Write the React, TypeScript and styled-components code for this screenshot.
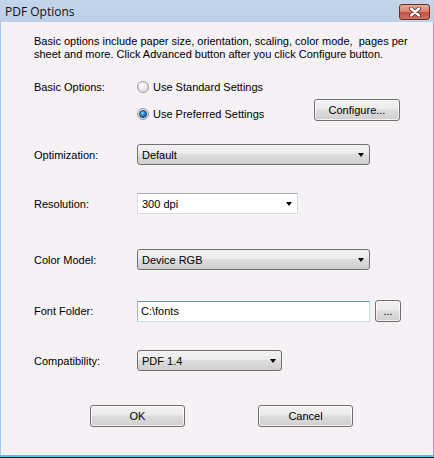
import React from "react";
import styled, { createGlobalStyle } from "styled-components";

const Global = createGlobalStyle`
  html, body { margin: 0; padding: 0; background: #f5f1f5; }
  body { font-family: "Liberation Sans", Arial, sans-serif; font-size: 11px; color: #000; }
  * { box-sizing: border-box; }
`;

const Window = styled.div`
  width: 434px;
  height: 458px;
  display: flex;
  flex-direction: column;
  background: #f5f1f5;
  box-shadow: inset 0 -1px 0 #000, inset 0 -3px 0 #46c5ee, inset 1px 0 0 #a6cbf0, inset -1px 0 0 #46c5ee;
`;

const TitleBar = styled.div`
  height: 22px;
  flex: none;
  display: flex;
  align-items: center;
  justify-content: space-between;
  padding: 0 4px 0 5px;
  background: linear-gradient(to bottom, #c3d5ea 0%, #bdd0e7 100%);
`;

const Title = styled.span`
  font-family: "Open Sans", "Liberation Sans", sans-serif;
  font-size: 12px;
  color: #111;
  margin-top: 1px;
`;

const CloseButton = styled.div`
  width: 31px;
  height: 16px;
  margin-top: 1px;
  border: 1px solid #6e2b22;
  border-radius: 3px;
  background: linear-gradient(to bottom, #e9a99b 0%, #d88676 45%, #c0503f 55%, #d27564 100%);
  display: flex;
  align-items: center;
  justify-content: center;
`;

const Body = styled.div`
  flex: 1;
  display: flex;
  flex-direction: column;
  padding: 13px 0 0 34px;
`;

const Description = styled.p`
  margin: 0;
  line-height: 13px;
  white-space: nowrap;
`;

const Row = styled.div<{ $top: number }>`
  display: grid;
  grid-template-columns: 103px auto 1fr;
  align-items: center;
  margin-top: ${(p) => p.$top}px;
`;

const Label = styled.span<{ $self?: string }>`
  align-self: ${(p) => p.$self || "center"};
  line-height: 20px;
`;

const RadioGroup = styled.div`
  width: 177px;
  display: flex;
  flex-direction: column;
  gap: 7px;
`;

const RadioLine = styled.label`
  display: flex;
  align-items: center;
  height: 20px;
  gap: 4px;
`;

const RadioCircle = styled.span<{ $checked?: boolean }>`
  width: 12px;
  height: 12px;
  border-radius: 50%;
  border: 1px solid #9a9a9a;
  background: radial-gradient(circle at 40% 35%, #ffffff 0%, #e4e4e4 55%, #cfcfcf 100%);
  display: flex;
  align-items: center;
  justify-content: center;
  &::after {
    content: "";
    display: ${(p) => (p.$checked ? "block" : "none")};
    width: 6px;
    height: 6px;
    border-radius: 50%;
    background: radial-gradient(circle at 40% 35%, #8fe0ff 0%, #1f8bd0 45%, #0b3d7c 100%);
    border: 0.5px solid #0d3a6e;
  }
`;

const Button = styled.div<{ $w: number; $h?: number }>`
  width: ${(p) => p.$w}px;
  height: ${(p) => p.$h || 22}px;
  border: 1px solid #707070;
  border-radius: 3px;
  background: linear-gradient(to bottom, #f2f2f2 0%, #ebebeb 45%, #dddddd 50%, #cfcfcf 100%);
  box-shadow: inset 0 0 0 1px rgba(255, 255, 255, 0.7);
  display: flex;
  align-items: center;
  justify-content: center;
`;

const ConfigureButton = styled(Button)`
  align-self: end;
  margin-bottom: 3px;
`;

const Select = styled.div<{ $w: number; $white?: boolean }>`
  width: ${(p) => p.$w}px;
  height: 21px;
  border: 1px solid ${(p) => (p.$white ? "#d8dde5" : "#707070")};
  border-top-color: ${(p) => (p.$white ? "#abadb3" : "#707070")};
  border-radius: ${(p) => (p.$white ? "1px" : "3px")};
  background: ${(p) =>
    p.$white
      ? "#ffffff"
      : "linear-gradient(to bottom, #f2f2f2 0%, #ebebeb 45%, #dddddd 50%, #cfcfcf 100%)"};
  display: flex;
  align-items: center;
  justify-content: space-between;
  padding: 0 5px 0 4px;
`;

const Arrow = styled.span`
  width: 0;
  height: 0;
  border-left: 3.5px solid transparent;
  border-right: 3.5px solid transparent;
  border-top: 4px solid #000;
`;

const TextInput = styled.div`
  width: 233px;
  height: 21px;
  background: #fff;
  border: 1px solid #c5dcf0;
  border-top-color: #6b8fb5;
  border-left-color: #9cbad8;
  border-radius: 1px;
  display: flex;
  align-items: center;
  padding-left: 3px;
`;

const InputGroup = styled.div`
  display: flex;
  align-items: center;
  gap: 5px;
`;

const ButtonBar = styled.div`
  display: flex;
  gap: 73px;
  margin: 34px 0 0 56px;
`;

export default function App() {
  return (
    <>
      <Global />
      <Window>
        <TitleBar>
          <Title>PDF Options</Title>
          <CloseButton>
            <svg width="14" height="10" viewBox="0 0 14 10">
              <path d="M3 1.5 L11 8.5 M11 1.5 L3 8.5" stroke="#5a1f18" strokeWidth="4" strokeLinecap="round" />
              <path d="M3 1.5 L11 8.5 M11 1.5 L3 8.5" stroke="#ffffff" strokeWidth="2.4" strokeLinecap="round" />
            </svg>
          </CloseButton>
        </TitleBar>
        <Body>
          <Description>
            Basic options include paper size, orientation, scaling, color mode,&nbsp; pages per
            <br />
            sheet and more. Click Advanced button after you click Configure button.
          </Description>

          <Row $top={16}>
            <Label $self="start">Basic Options:</Label>
            <RadioGroup>
              <RadioLine>
                <RadioCircle />
                Use Standard Settings
              </RadioLine>
              <RadioLine>
                <RadioCircle $checked />
                Use Preferred Settings
              </RadioLine>
            </RadioGroup>
            <ConfigureButton $w={86}>Configure...</ConfigureButton>
          </Row>

          <Row $top={20}>
            <Label>Optimization:</Label>
            <Select $w={233}>
              Default
              <Arrow />
            </Select>
          </Row>

          <Row $top={28}>
            <Label>Resolution:</Label>
            <Select $w={161} $white>
              300 dpi
              <Arrow />
            </Select>
          </Row>

          <Row $top={35}>
            <Label>Color Model:</Label>
            <Select $w={233}>
              Device RGB
              <Arrow />
            </Select>
          </Row>

          <Row $top={30}>
            <Label>Font Folder:</Label>
            <InputGroup>
              <TextInput>C:\fonts</TextInput>
              <Button $w={26}>...</Button>
            </InputGroup>
          </Row>

          <Row $top={28}>
            <Label>Compatibility:</Label>
            <Select $w={145}>
              PDF 1.4
              <Arrow />
            </Select>
          </Row>

          <ButtonBar>
            <Button $w={95}>OK</Button>
            <Button $w={95}>Cancel</Button>
          </ButtonBar>
        </Body>
      </Window>
    </>
  );
}
